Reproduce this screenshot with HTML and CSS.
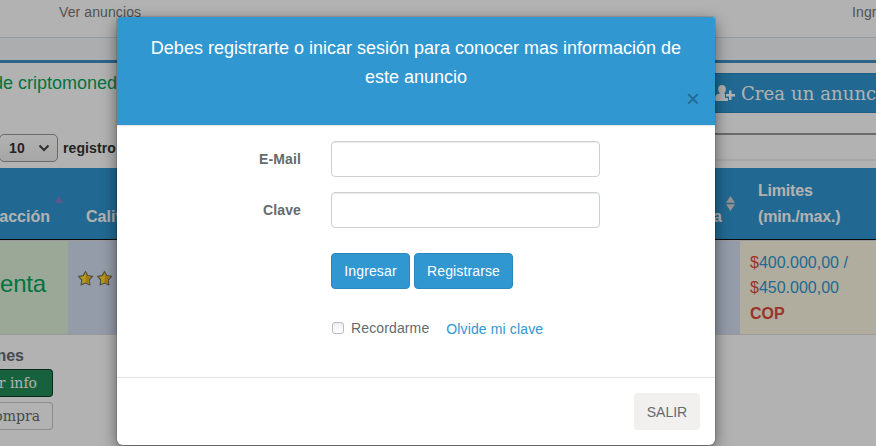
FILE: index.html
```html
<!DOCTYPE html>
<html lang="es">
<head>
<meta charset="utf-8">
<title>Anuncios</title>
<link rel="stylesheet" href="styles.css">
</head>
<body>
<div class="page">
  <nav class="navbar"><a>Ver anuncios</a><a class="login">Ingresar</a></nav>
  <div class="strip"></div>
  <header class="heading">
    <h1><span>de criptomoned</span></h1>
    <a class="create">
      <svg width="22" height="18" viewBox="0 0 22 18"><path fill="currentColor" d="M8 1C5.700 1 4.200 2.600 4.200 5c0 2 .8 3.700 2 4.500C3 10 1 11 1 14v1.500c0 .9.600 1.500 1.500 1.500H13c.7 0 1-.5 1-1v-2h-3v-4.200l-1.200-.3c1.300-.8 2-2.500 2-4.500C11.800 2.600 10.300 1 8 1zM15 6.500h2.500V10H21v2.500h-3.500V16H15v-3.500H12V10h3z"/></svg>
      <span>Crea un anuncio</span>
    </a>
  </header>
  <div class="controls">
    <span class="length">10<svg width="12" height="8" viewBox="0 0 12 8"><path d="M1.500 1.500 6 6l4.500-4.500" fill="none" stroke="#444" stroke-width="2"/></svg></span>
    <span class="records">registro</span>
    <span class="search"></span>
  </div>
  <div class="grid thead">
    <div class="th-first"><b>acción</b><svg width="8" height="7" viewBox="0 0 8 7"><path d="M4 0l4 7H0z" fill="#8b7cc8"/></svg></div>
    <div class="th-mid"><b>Calif</b><span class="price"><b>a</b><svg width="9" height="15" viewBox="0 0 9 15"><path d="M4.500 0L9 6.700H0zM0 8.300h9L4.500 15z" fill="#d8d0d0"/></svg></span></div>
    <div class="th-last"><b>Limites<br>(min./max.)</b></div>
  </div>
  <div class="grid row">
    <div class="sale">enta</div>
    <div class="rating">
      <svg width="16" height="17" viewBox="0 0 16 17"><path d="M7.500 1.500l2.200 4.100 4.900.8-3.400 3.600.7 5-4.400-2-4.400 2 .7-5L.6 6.400l4.700-.8z" fill="#ffe02c" stroke="#75735f" stroke-width="1.200" stroke-linejoin="round"/><path d="M8 3.500l1.200 2.800 4 .6-3 2.800.8 4-3.500-1.700z" fill="#f8a826"/></svg>
      <svg width="16" height="17" viewBox="0 0 16 17"><path d="M7.500 1.500l2.200 4.100 4.900.8-3.400 3.600.7 5-4.400-2-4.400 2 .7-5L.6 6.400l4.700-.8z" fill="#ffe02c" stroke="#75735f" stroke-width="1.200" stroke-linejoin="round"/><path d="M8 3.500l1.200 2.800 4 .6-3 2.800.8 4-3.500-1.700z" fill="#f8a826"/></svg>
    </div>
    <div class="limits"><i>$</i>400.000,00 /<br><i>$</i>450.000,00<br><b>COP</b></div>
  </div>
  <div class="actions">
    <b>nes</b>
    <a class="info">r info</a>
    <a class="buy">ompra</a>
  </div>
</div>
<div class="backdrop"></div>
<div class="modal">
  <div class="modal-header">
    <h4>Debes registrarte o inicar sesión para conocer mas información de este anuncio</h4>
    <button class="close">×</button>
  </div>
  <form class="modal-body">
    <div class="field"><label>E-Mail</label><input type="text"></div>
    <div class="field"><label>Clave</label><input type="password"></div>
    <div class="buttons"><button type="button">Ingresar</button><button type="button">Registrarse</button></div>
    <div class="remember"><span class="check"></span><span>Recordarme</span><a>Olvide mi clave</a></div>
  </form>
  <div class="modal-footer"><button>SALIR</button></div>
</div>
</body>
</html>
```
FILE: styles.css
```css
* { box-sizing: border-box; }
body { margin: 0; height: 446px; overflow: hidden; background: #fff; color: #636b6f; font: 14px/22px "Liberation Sans", Arial, sans-serif; }
button { font: inherit; letter-spacing: inherit; cursor: pointer; }
svg { flex: none; display: block; }
.page { height: 446px; width: 876px; overflow: hidden; }
.navbar { height: 38px; border-bottom: 1px solid #d3e0e9; display: flex; justify-content: space-between; padding: 1px 0 0 59px; color: #777; letter-spacing: .1px; white-space: nowrap; }
.login { width: 24px; overflow: hidden; }
.strip { height: 25px; background: #f5f8fa; border-bottom: 3px solid #4191c5; }
.heading { height: 70px; display: flex; justify-content: space-between; padding-top: 10px; }
h1 { margin: 0; width: 117px; display: flex; justify-content: flex-end; overflow: hidden; font-size: 18px; font-weight: 400; line-height: 20px; color: #00a65a; white-space: nowrap; }
.create { width: 176px; height: 40px; display: flex; align-items: center; gap: 5px; padding-left: 14px; overflow: hidden; white-space: nowrap; background: #3097d1; border: solid #2a88bd; border-width: 1px 0; color: #fff; font: 18px "DejaVu Serif", serif; letter-spacing: .1px; }
.controls { height: 35px; display: flex; align-items: flex-start; color: #333; font-weight: 700; letter-spacing: .1px; }
.length { width: 59px; height: 28px; margin: 1px 0 0 -1px; padding: 0 7px 0 9px; display: flex; align-items: center; justify-content: space-between; border: 1px solid #999; border-radius: 5px; background: linear-gradient(#fff, #eee); }
.records { margin: 4px 0 0 5px; }
.search { width: 176px; height: 28px; margin-left: auto; border-top: 2px solid #999; border-bottom: 2px solid #f0f0f0; }
.grid { display: grid; grid-template-columns: 68px 672px 136px; }
.thead { height: 72px; background: #3097d1; border-bottom: 1px solid #111; color: #fff; font-size: 16px; line-height: 26px; }
.th-first { display: flex; align-items: flex-end; justify-content: flex-end; padding: 0 5px 9px 0; gap: 5px; }
.th-first svg { margin-bottom: 27px; }
.th-mid { display: flex; justify-content: space-between; align-items: flex-end; padding: 0 5px 9px 18px; }
.price { display: flex; align-items: flex-end; gap: 4px; }
.price svg { margin-bottom: 19px; }
.th-last { padding: 10px 0 0 18px; letter-spacing: -.2px; }
.row { height: 95px; border-top: 1px solid #ddd; border-bottom: 1px solid #ddd; }
.sale { background: #dff0d8; color: #00a65a; font-size: 24px; line-height: 86px; text-align: right; padding-right: 23px; letter-spacing: -.2px; }
.rating { background: #d6e0f3; display: flex; gap: 3px; padding: 29px 0 0 10px; }
.limits { background: #fcf8e3; color: #3097d1; font-size: 16px; line-height: 25.4px; padding: 9px 0 0 10px; }
.limits i { font-style: normal; color: #dd4b39; }
.limits b { color: #dd4b39; }
.actions { width: 53px; display: flex; flex-direction: column; align-items: stretch; padding-top: 8px; }
.actions b { display: flex; justify-content: flex-end; width: 24px; font-size: 16px; line-height: 26px; }
.info, .buy { height: 28px; display: flex; justify-content: flex-end; white-space: nowrap; padding-right: 15px; border: 1px solid #ccc; border-left: 0; border-radius: 0 4px 4px 0; font: 14px/26px "DejaVu Serif", serif; }
.info { background: #218c5b; border-color: #103c27; color: #fff; }
.buy { margin-top: 5px; padding-right: 12px; }
.backdrop { position: absolute; inset: 0; background: rgba(0, 0, 0, .3); }
.modal { position: absolute; left: 117px; top: 17px; width: 598px; height: 428px; background: #fff; border-radius: 2px 2px 6px 6px; overflow: hidden; box-shadow: 0 0 0 1px rgba(0, 0, 0, .1), 0 5px 15px rgba(0, 0, 0, .5); display: flex; flex-direction: column; letter-spacing: .13px; }
.modal-header { height: 109px; padding: 17px 15px 0; background: #3097d1; border-bottom: 1px solid #e5e5e5; color: #fff; text-align: center; letter-spacing: 0; }
h4 { margin: 0; padding: 0 16px; font-size: 18px; line-height: 29px; font-weight: 400; }
.close { display: block; margin: -5px 0 0 auto; padding: 0; border: 0; background: none; color: #000; opacity: .3; font-size: 24px; line-height: 24px; }
.modal-body { flex: 1; padding: 15px 115px 0 15px; }
.field { display: flex; align-items: center; gap: 30px; margin-bottom: 15px; }
.field label { width: 169px; text-align: right; font-weight: 700; }
.field input { width: 269px; height: 36px; border: 1px solid #ccd0d2; border-radius: 4px; box-shadow: inset 0 1px 1px rgba(0, 0, 0, .075); }
.buttons { display: grid; grid-template-columns: 79px 99px; gap: 4px; margin: 25px 0 0 199px; }
.buttons button { height: 36px; padding: 0; color: #fff; background: #3097d1; border: 1px solid #2a88bd; border-radius: 4px; }
.remember { display: flex; align-items: center; margin: 27px 0 0 200px; white-space: nowrap; }
.check { width: 12px; height: 12px; margin-right: 7px; border: 1px solid #bbb; border-radius: 3px; background: linear-gradient(#eee, #fff); }
.remember a { color: #3097d1; margin: 2px 0 0 17px; }
.modal-footer { height: 68px; border-top: 1px solid #e5e5e5; padding: 15px; display: flex; justify-content: flex-end; }
.modal-footer button { width: 66px; height: 37px; padding: 0; border: 0; border-radius: 4px; background: #f1f0ef; color: #636b6f; letter-spacing: 0; }
```
